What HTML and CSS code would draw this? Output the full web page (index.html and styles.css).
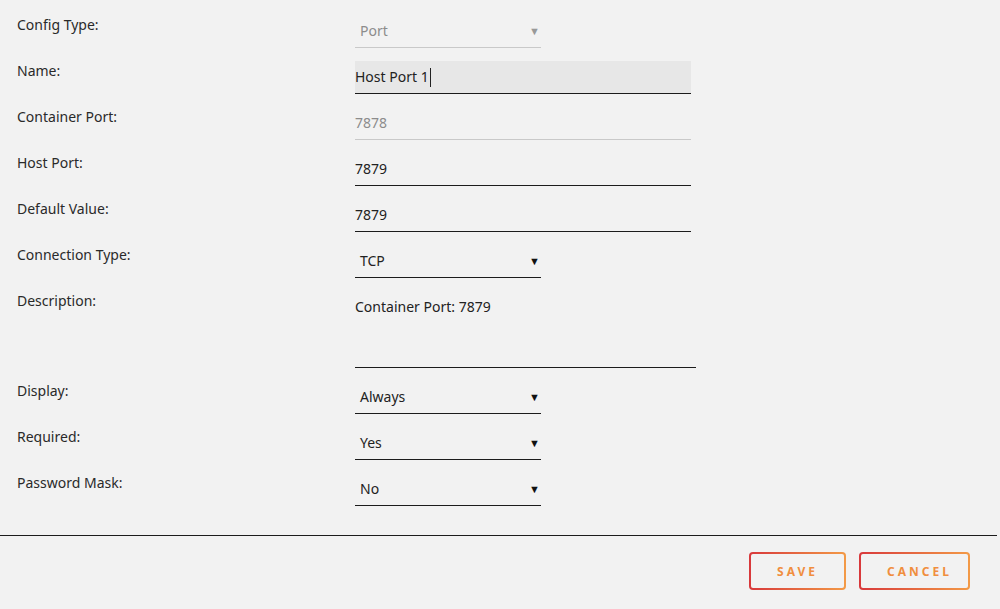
FILE: index.html
```html
<!DOCTYPE html>
<html lang="en">
<head>
	<meta charset="UTF-8">
	<title>Port Config</title>
	<link rel="stylesheet" href="styles.css">
</head>
<body>
	<div class="form">
		<div class="row">
			<div class="label">Config Type:</div>
			<div class="select disabled"><span>Port</span><i class="arrow">&#9660;</i></div>
		</div>
		<div class="row">
			<div class="label">Name:</div>
			<div class="field focus"><span>Host Port 1</span><b class="caret"></b></div>
		</div>
		<div class="row">
			<div class="label">Container Port:</div>
			<div class="field disabled"><span>7878</span></div>
		</div>
		<div class="row">
			<div class="label">Host Port:</div>
			<div class="field"><span>7879</span></div>
		</div>
		<div class="row">
			<div class="label">Default Value:</div>
			<div class="field"><span>7879</span></div>
		</div>
		<div class="row">
			<div class="label">Connection Type:</div>
			<div class="select"><span>TCP</span><i class="arrow">&#9660;</i></div>
		</div>
		<div class="row">
			<div class="label">Description:</div>
			<div class="area"><span>Container Port: 7879</span></div>
		</div>
		<div class="row">
			<div class="label">Display:</div>
			<div class="select"><span>Always</span><i class="arrow">&#9660;</i></div>
		</div>
		<div class="row">
			<div class="label">Required:</div>
			<div class="select"><span>Yes</span><i class="arrow">&#9660;</i></div>
		</div>
		<div class="row">
			<div class="label">Password Mask:</div>
			<div class="select"><span>No</span><i class="arrow">&#9660;</i></div>
		</div>
	</div>
	<div class="footer">
		<button class="btn">SAVE</button>
		<button class="btn">CANCEL</button>
	</div>
</body>
</html>
```

FILE: styles.css
```css
*{
	margin: 0;
	padding: 0;
	box-sizing: border-box;
}
html,body{
	width: 100%;
	height: 100%;
	overflow: hidden;
	background: #f2f2f2;
	font-family: "Noto Sans", "Open Sans", sans-serif;
	font-size: 14px;
	color: #222;
}
.form{
	padding-top: 2px;
	border-bottom: 1px solid #1c1c1c;
	width: 997px;
	padding-bottom: 29px;
}
.row{
	display: flex;
	align-items: flex-start;
	min-height: 46px;
}
.label{
	width: 355px;
	padding-left: 17px;
	margin-top: 14px;
	line-height: 18px;
	color: #2a2a2a;
}
.select,
.field,
.area{
	margin-top: 13px;
	height: 33px;
	line-height: 32px;
	border-bottom: 1px solid #1c1c1c;
	display: flex;
	align-items: center;
}
.select{
	width: 186px;
	padding: 0 1px 0 5px;
	justify-content: space-between;
}
.select .arrow{
	font-style: normal;
	font-size: 11px;
	line-height: 32px;
	color: #111;
}
.select.disabled{
	color: #8c8c8c;
	border-bottom-color: #c9c9c9;
}
.select.disabled .arrow{
	color: #999;
}
.field{
	width: 336px;
}
.field.focus{
	background: #e7e7e7;
}
.field.disabled{
	color: #8c8c8c;
	border-bottom-color: #c9c9c9;
}
.caret{
	display: inline-block;
	width: 1px;
	height: 19px;
	margin-left: 1px;
	background: #222;
}
.area{
	width: 341px;
	height: 77px;
	align-items: flex-start;
}
.footer{
	display: flex;
	justify-content: flex-end;
	gap: 13px;
	padding: 16px 30px 0 0;
}
.btn{
	height: 38px;
	padding: 0 26px;
	border: 2px solid transparent;
	border-radius: 4px;
	background: linear-gradient(#f2f2f2, #f2f2f2) padding-box,
		linear-gradient(to right, #d8383b, #f39a46) border-box;
	color: #f08e3e;
	font-family: "Noto Sans", "Open Sans", sans-serif;
	font-weight: 700;
	font-size: 12px;
	letter-spacing: 3px;
	cursor: pointer;
}
.btn:first-child{
	width: 97px;
}
.btn:last-child{
	width: 111px;
}
```
